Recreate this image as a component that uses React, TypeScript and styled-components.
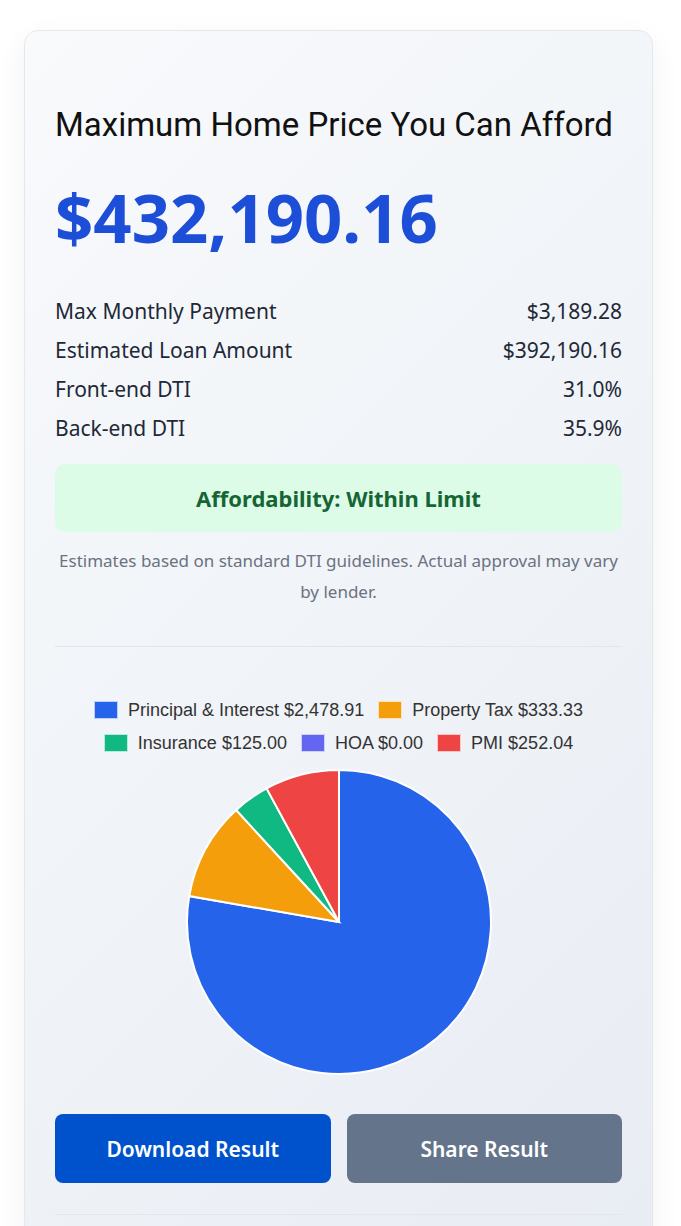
import React from 'react';
import styled, { createGlobalStyle } from 'styled-components';

const GlobalStyle = createGlobalStyle`
	body {
		margin: 0;
		background: #ffffff;
		font-family: 'Noto Sans', 'Open Sans', sans-serif;
		color: #1f2937;
	}
`;

const slices = [
	{ label: 'Principal & Interest', value: 2478.91, color: '#2563eb' },
	{ label: 'Property Tax', value: 333.33, color: '#f59e0b' },
	{ label: 'Insurance', value: 125.0, color: '#10b981' },
	{ label: 'HOA', value: 0, color: '#6366f1' },
	{ label: 'PMI', value: 252.04, color: '#ef4444' },
];

const stats = [
	['Max Monthly Payment', '$3,189.28'],
	['Estimated Loan Amount', '$392,190.16'],
	['Front-end DTI', '31.0%'],
	['Back-end DTI', '35.9%'],
];

const money = (n: number) =>
	'$' + n.toLocaleString('en-US', { minimumFractionDigits: 2, maximumFractionDigits: 2 });

const Pie = () => {
	const total = slices.reduce((s, x) => s + x.value, 0);
	const r = 152;
	const c = 154;
	let start = -Math.PI / 2;
	const paths = slices
		.filter((s) => s.value > 0)
		.map((s) => {
			const sweep = (s.value / total) * Math.PI * 2;
			const end = start + sweep;
			const x1 = c + r * Math.cos(start);
			const y1 = c + r * Math.sin(start);
			const x2 = c + r * Math.cos(end);
			const y2 = c + r * Math.sin(end);
			const large = sweep > Math.PI ? 1 : 0;
			const d = `M${c},${c} L${x1},${y1} A${r},${r} 0 ${large} 1 ${x2},${y2} Z`;
			start = end;
			return <path key={s.label} d={d} fill={s.color} stroke="#ffffff" strokeWidth={2} />;
		});
	return (
		<svg width={308} height={308} viewBox="0 0 308 308">
			{paths}
		</svg>
	);
};

const App = () => {
	return (
		<Page>
			<GlobalStyle />
			<Card>
				<Title>Maximum Home Price You Can Afford</Title>
				<BigPrice>$432,190.16</BigPrice>
				<StatList>
					{stats.map(([k, v]) => (
						<StatRow key={k}>
							<span>{k}</span>
							<span>{v}</span>
						</StatRow>
					))}
				</StatList>
				<StatusBox>Affordability: Within Limit</StatusBox>
				<Note>Estimates based on standard DTI guidelines. Actual approval may vary by lender.</Note>
				<Divider />
				<ChartArea>
					<Legend>
						{slices.map((s) => (
							<LegendItem key={s.label}>
								<Swatch color={s.color} />
								{s.label} {money(s.value)}
							</LegendItem>
						))}
					</Legend>
					<Pie />
				</ChartArea>
				<Buttons>
					<ActionButton variant="primary">Download Result</ActionButton>
					<ActionButton variant="secondary">Share Result</ActionButton>
				</Buttons>
				<BottomDivider />
			</Card>
		</Page>
	);
};

export default App;

const Page = styled.div`
	padding: 30px 28px 40px 24px;
`;

const Card = styled.div`
	background: linear-gradient(135deg, #f8fafc 0%, #e8ecf3 100%);
	border: 1px solid #e5e7eb;
	border-radius: 14px;
	box-shadow: 0 10px 30px rgba(0, 0, 0, 0.06);
	padding: 74px 30px 60px;
`;

const Title = styled.h2`
	margin: 0;
	font-family: Roboto, 'Noto Sans', sans-serif;
	font-weight: 400;
	font-size: 33px;
	line-height: 40px;
	color: #111111;
`;

const BigPrice = styled.div`
	margin-top: 34px;
	font-size: 67px;
	font-weight: 700;
	line-height: 76px;
	color: #1d4ed8;
	letter-spacing: 0;
`;

const StatList = styled.div`
	margin-top: 37px;
	display: flex;
	flex-direction: column;
`;

const StatRow = styled.div`
	display: flex;
	justify-content: space-between;
	font-size: 21px;
	line-height: 39px;
	color: #1f2937;
`;

const StatusBox = styled.div`
	margin-top: 16px;
	height: 68px;
	border-radius: 10px;
	background: #dcfce7;
	color: #166534;
	font-weight: 700;
	font-size: 22px;
	display: flex;
	align-items: center;
	justify-content: center;
`;

const Note = styled.p`
	margin: 13px 0 0;
	text-align: center;
	font-size: 17px;
	line-height: 31px;
	color: #6b7280;
`;

const Divider = styled.hr`
	border: none;
	border-top: 1px solid #e2e6ec;
	margin: 39px 0 0;
`;

const BottomDivider = styled(Divider)`
	margin-top: 31px;
`;

const ChartArea = styled.div`
	margin-top: 53px;
	display: flex;
	flex-direction: column;
	align-items: center;
`;

const Legend = styled.div`
	display: flex;
	flex-wrap: wrap;
	justify-content: center;
	column-gap: 14px;
	row-gap: 13px;
	max-width: 540px;
	font-family: 'Liberation Sans', Arial, sans-serif;
	font-size: 18px;
	color: #333333;
	margin-bottom: 15px;
`;

const LegendItem = styled.span`
	display: inline-flex;
	align-items: center;
	gap: 10px;
	line-height: 20px;
`;

const Swatch = styled.span<{ color: string }>`
	width: 24px;
	height: 18px;
	background: ${(p) => p.color};
	border: 1px solid rgba(255, 255, 255, 0.7);
	box-sizing: border-box;
`;

const Buttons = styled.div`
	margin-top: 38px;
	display: grid;
	grid-template-columns: 1fr 1fr;
	gap: 16px;
`;

const ActionButton = styled.button<{ variant: 'primary' | 'secondary' }>`
	height: 69px;
	border: none;
	border-radius: 8px;
	font-family: 'Noto Sans', sans-serif;
	font-size: 21px;
	font-weight: 600;
	color: #ffffff;
	background: ${(p) => (p.variant === 'primary' ? '#0052cc' : '#64748b')};
	cursor: pointer;
`;
